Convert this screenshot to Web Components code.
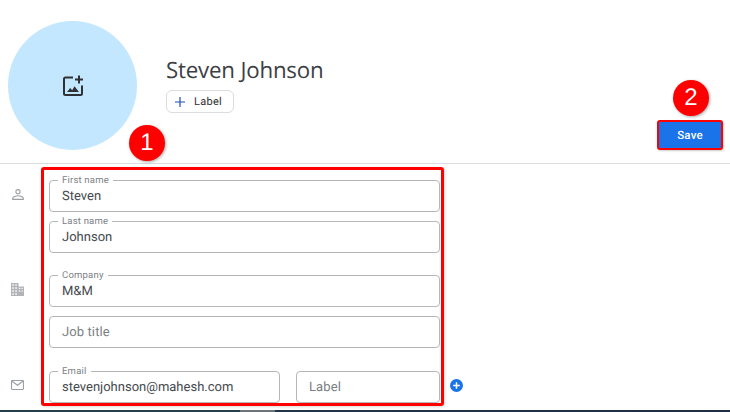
<!DOCTYPE html>
<html><head><meta charset="utf-8">
<style>
html,body{margin:0;padding:0;background:#fff}
body{width:730px;height:412px;overflow:hidden;position:relative;font-family:Roboto,sans-serif;text-rendering:geometricPrecision}
</style></head><body>
<contact-page></contact-page>
<template id="tf">
<style>
:host{display:block;position:relative;height:30px;border:1px solid #b4b6b8;border-radius:4px;box-sizing:content-box;font-family:Roboto,sans-serif}
.l{position:absolute;left:8px;top:-6.500px;background:#fff;padding:0 4px;font-size:9.500px;line-height:12px;color:#7b8085;letter-spacing:.2px;white-space:nowrap}
.v{position:absolute;left:12px;top:7px;font-size:13px;line-height:18px;color:#45494d;white-space:nowrap}
.v.ph{color:#7b7f83;letter-spacing:.1px}
</style>
<span class="l"></span><span class="v"></span>
</template>
<script>
const tfT=document.getElementById('tf');
class TextField extends HTMLElement{
 constructor(){super();this.attachShadow({mode:'open'}).append(tfT.content.cloneNode(true));}
 connectedCallback(){
  const s=this.shadowRoot,l=s.querySelector('.l'),v=s.querySelector('.v');
  const lab=this.getAttribute('label'),val=this.getAttribute('value');
  if(lab)l.textContent=lab;else l.remove();
  if(val)v.textContent=val;else{v.textContent=this.getAttribute('placeholder')||'';v.classList.add('ph');}
 }
}
customElements.define('text-field',TextField);
class CalloutBadge extends HTMLElement{
 constructor(){super();this.attachShadow({mode:'open'}).innerHTML=`<style>
 :host{display:flex;align-items:center;justify-content:center;position:absolute;width:36px;height:36px;border-radius:50%;background:#fe0000;color:#fff;font:400 24px/1 "Liberation Sans",sans-serif;box-shadow:1px 1px 3px rgba(0,0,0,.35)}
 </style><slot></slot>`;}
}
customElements.define('callout-badge',CalloutBadge);
class ContactPage extends HTMLElement{
 constructor(){super();this.attachShadow({mode:'open'}).innerHTML=`<style>
 :host{display:flex;flex-direction:column;width:730px;height:412px;position:relative;overflow:hidden;font-family:Roboto,sans-serif}
 header{height:163px;flex:none;border-bottom:1px solid #dadce0;display:flex;box-sizing:content-box;padding-left:8px;position:relative}
 .avatar{width:129px;height:129px;border-radius:50%;background:#c2e7ff;margin-top:21px;display:flex;align-items:center;justify-content:center;flex:none}
 .who{margin:56px 0 0 29px;display:flex;flex-direction:column;align-items:flex-start;gap:6px}
 h1{margin:0;font:400 22.300px/28px "Open Sans",Inter,sans-serif;color:#3c4043;letter-spacing:-.2px}
 .chip{display:flex;align-items:center;gap:8px;height:21px;box-sizing:content-box;border:1px solid #dadce0;border-radius:6px;padding-left:7px;width:59px;font-size:11px;font-weight:400;color:#303134;letter-spacing:.3px}
 .save-wrap{position:absolute;right:7px;top:120px;border:2px solid #f00;border-radius:3px;padding:1px;background:#1a73e8;box-shadow:1px 1px 2px rgba(0,0,0,.2)}
 .save{width:60px;height:24px;display:flex;align-items:center;justify-content:center;color:#fff;font-size:11.500px;font-weight:500;letter-spacing:.2px}
 main{flex:1;display:flex;min-height:0}
 .icons{width:41px;flex:none;position:relative}
 .icons svg{position:absolute}
 .form{width:403px;height:239px;margin-top:3px;box-sizing:border-box;border:3px solid #ff0000;border-radius:3px;padding:10px 1px 0 5px;display:flex;flex-direction:column;flex:none;box-shadow:1px 1px 3px rgba(0,0,0,.15)}
 .row{display:flex;gap:16px}
 .row text-field:first-child{width:229px}
 .row text-field:last-child{width:142px}
 .plus{margin-left:6px;margin-top:215px;flex:none}
 footer{height:2px;flex:none;background:linear-gradient(90deg,#20404b 0,#20404b 240px,#6d7479 240px,#6d7479 275px,#20344a 275px,#1f2d45 100%)}
 </style>
 <header>
  <div class="avatar"><svg width="24" height="24" viewBox="0 0 24 24" fill="none" stroke="#303134" stroke-width="2"><path d="M12 3.500H4.500a1.500 1.500 0 0 0-1.500 1.500v14.500a1.500 1.500 0 0 0 1.500 1.500H19.500a1.500 1.500 0 0 0 1.500-1.500V11.500"/><path d="M18 1.500v8M14 5.500h8"/><path d="M6 18l3.200-4 2 2.300 2.300-4 4.500 5.700z" fill="#303134" stroke="none"/></svg></div>
  <div class="who"><h1>Steven Johnson</h1>
   <div class="chip"><svg width="12" height="12" viewBox="0 0 12 12"><path d="M6 1v10M1 6h10" stroke="#1a4fb8" stroke-width="1.200"/></svg><span>Label</span></div></div>
  <div class="save-wrap"><div class="save">Save</div></div>
 </header>
 <main>
  <div class="icons">
   <svg style="left:12px;top:25px" width="12" height="11" viewBox="0 0 12 11" fill="none" stroke="#9aa0a6" stroke-width="1.100"><circle cx="6" cy="2.700" r="2.100"/><path d="M.7 10.400V9.200C.7 7.700 3.800 6.700 6 6.700s5.300 1 5.300 2.500v1.200z"/></svg>
   <svg style="left:11px;top:119px" width="13" height="13" viewBox="0 0 13 13" fill="#b0b4b8"><path d="M0 0h7.500v3.500H13V13H0zM1.300 1.200v1.600h1.500V1.200zm3 0v1.600h1.500V1.200zm-3 3v1.600h1.500V4.200zm3 0v1.600h1.500V4.200zm3.500.600v1.200h1.500V4.800zm2.700 0v1.200h1.200V4.800zM1.300 7.200v1.600h1.500V7.200zm3 0v1.600h1.500V7.200zm3.500.300v1.300h1.500V7.500zm2.700 0v1.300h1.200V7.500zM1.300 10.200v1.600h1.500v-1.600zm3 0v1.600h1.500v-1.600z"/></svg>
   <svg style="left:11px;top:216px" width="13" height="10" viewBox="0 0 13 10" fill="none" stroke="#9aa0a6" stroke-width="1.100"><rect x=".55" y=".55" width="11.900" height="8.900" rx=".6"/><path d="M.8 1l5.700 4.300L12.200 1"/></svg>
  </div>
  <div class="form">
   <text-field label="First name" value="Steven"></text-field>
   <text-field style="margin-top:9px" label="Last name" value="Johnson"></text-field>
   <text-field style="margin-top:22px" label="Company" value="M&amp;M"></text-field>
   <text-field style="margin-top:9px" placeholder="Job title"></text-field>
   <div class="row" style="margin-top:23px"><text-field label="Email" value="stevenjohnson@mahesh.com"></text-field><text-field placeholder="Label"></text-field></div>
  </div>
  <svg class="plus" width="13" height="13" viewBox="0 0 13 13"><circle cx="6.500" cy="6.500" r="6.500" fill="#1a73e8"/><path d="M6.500 3.200v6.600M3.200 6.500h6.600" stroke="#fff" stroke-width="1.500"/></svg>
 </main>
 <footer></footer>
 <callout-badge style="left:129px;top:125px">1</callout-badge>
 <callout-badge style="left:673px;top:80px">2</callout-badge>`;}
}
customElements.define('contact-page',ContactPage);
</script>
</body></html>
